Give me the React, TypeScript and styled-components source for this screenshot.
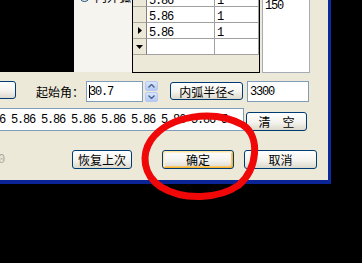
import styled, { createGlobalStyle, css } from "styled-components";

const GlobalStyle = createGlobalStyle`
  html, body {
    margin: 0;
    padding: 0;
    background: #000;
    overflow: hidden;
  }
`;

const cjk = `"Noto Sans CJK SC", "Liberation Sans", sans-serif`;
const mono = `"Liberation Mono", "Noto Sans CJK SC", monospace`;

const Screen = styled.div`
  position: relative;
  width: 362px;
  height: 263px;
  overflow: hidden;
  background: #000;
`;

const Window = styled.div`
  box-sizing: border-box;
  width: 331px;
  height: 184px;
  display: flex;
  flex-direction: column;
  background: #ece9d8;
  border-right: 3px solid #0a2ba0;
  border-bottom: 4px solid #0a2395;
  overflow: hidden;
  font-family: ${cjk};
  font-size: 12px;
  color: #000;
`;

const TopSection = styled.div`
  display: flex;
  align-items: flex-start;
  height: 73px;
  flex-shrink: 0;
`;

const Preview = styled.div`
  width: 74px;
  height: 72px;
  background: #000;
`;

const OptionsPanel = styled.div`
  width: 58px;
  height: 72px;
  background: #f5f4ef;
  overflow: hidden;
  padding-left: 5px;
  box-sizing: border-box;
`;

const RadioRow = styled.div`
  display: flex;
  align-items: center;
  gap: 5px;
  margin-top: -10px;
  height: 13px;
  line-height: 13px;
`;

const Radio = styled.span`
  width: 11px;
  height: 11px;
  border-radius: 50%;
  border: 1px solid #1c5180;
  box-sizing: border-box;
  background: radial-gradient(circle at 50% 50%, #2fa82f 0 2px, #e6e6e0 3px);
`;

const DataTable = styled.div`
  box-sizing: border-box;
  width: 128px;
  height: 73px;
  border: 1px solid #000;
  border-top: none;
  background: #ece9d8;
  overflow: hidden;
`;

const Rows = styled.div`
  margin-top: -9px;
`;

const Row = styled.div`
  display: flex;
  height: 16px;
`;

const RowHeader = styled.div`
  box-sizing: border-box;
  width: 14px;
  height: 16px;
  background: #ece9d8;
  border-right: 1px solid #808080;
  border-bottom: 1px solid #aca899;
  display: flex;
  align-items: center;
  justify-content: center;
`;

const Cell = styled.div<{ $w: number }>`
  box-sizing: border-box;
  width: ${(p) => p.$w}px;
  height: 16px;
  overflow: hidden;
  background: #fff;
  border-right: 1px solid #a0a0a0;
  border-bottom: 1px solid #a0a0a0;
  padding-left: 2px;
  font-family: ${mono};
  font-size: 12px;
  letter-spacing: -1.2px;
  line-height: 20px;
`;

const ListBox = styled.div`
  box-sizing: border-box;
  width: 48px;
  height: 73px;
  margin-left: 2px;
  background: #fff;
  border: 1px solid #a5acb5;
  border-top: none;
  padding-left: 2px;
  font-family: ${mono};
  font-size: 12px;
  letter-spacing: -1.2px;
  line-height: 12px;
  overflow: hidden;
`;

const ParamRow = styled.div`
  display: flex;
  align-items: flex-start;
  margin-top: 8px;
  height: 21px;
  flex-shrink: 0;
`;

const DataRow = styled.div`
  display: flex;
  align-items: flex-end;
  margin-top: 6px;
  height: 23px;
  flex-shrink: 0;
`;

const ActionRow = styled.div`
  display: flex;
  align-items: center;
  margin-top: 19px;
  height: 19px;
  flex-shrink: 0;
`;

const Button = styled.div<{ $w: number; $h?: number; $ml?: number; $default?: boolean }>`
  box-sizing: border-box;
  flex-shrink: 0;
  width: ${(p) => p.$w}px;
  height: ${(p) => p.$h ?? 18}px;
  margin-left: ${(p) => p.$ml ?? 0}px;
  border: 1px solid #003c74;
  border-radius: 3px;
  background: linear-gradient(#ffffff 0%, #f4f3ee 55%, #dcd8cc 100%);
  display: flex;
  align-items: center;
  justify-content: center;
  font-family: ${cjk};
  font-size: 12px;
  white-space: nowrap;
  ${(p) =>
    p.$default &&
    css`
      box-shadow: inset 1px 1px 0 #ffe7a2, inset -1px -1px 0 #f8b330,
        inset 2px 2px 0 #fff0cf, inset -2px -2px 0 #f9c66b;
    `}
`;

const Label = styled.div`
  width: 50px;
  margin-left: 20px;
  height: 21px;
  line-height: 21px;
  white-space: nowrap;
`;

const Field = styled.div<{ $w: number; $h?: number; $ml?: number }>`
  box-sizing: border-box;
  flex-shrink: 0;
  width: ${(p) => p.$w}px;
  height: ${(p) => p.$h ?? 21}px;
  margin-left: ${(p) => p.$ml ?? 0}px;
  background: #fff;
  border: 1px solid #7f9db9;
  padding-left: 2px;
  font-family: ${mono};
  font-size: 12px;
  letter-spacing: -1.2px;
  white-space: nowrap;
  overflow: hidden;
  display: flex;
  align-items: center;
`;

const FieldText = styled.span`
  margin-left: -2px;
  overflow: hidden;
`;

const Caret = styled.span`
  display: inline-block;
  width: 1px;
  height: 13px;
  background: #000;
  margin-right: -1px;
`;

const Spin = styled.div`
  display: flex;
  flex-direction: column;
  gap: 1px;
  width: 13px;
  height: 21px;
  margin-left: 2px;
`;

const SpinHalf = styled.div`
  flex: 1;
  border-radius: 2px;
  background: linear-gradient(#d9e5fd, #b4c8f6);
  border: 1px solid #b7c9f1;
  box-sizing: border-box;
  display: flex;
  align-items: center;
  justify-content: center;
`;

const Disabled = styled.div`
  width: 74px;
  margin-left: -2px;
  color: #aca899;
  font-family: ${mono};
  font-size: 12px;
`;

const Mark = styled.svg`
  position: absolute;
  left: 139px;
  top: 107px;
  pointer-events: none;
`;

const Arrow = ({ dir }: { dir: "up" | "down" }) => (
  <svg width="7" height="4" viewBox="0 0 7 4">
    <path
      d={dir === "up" ? "M0.5 3.5 L3.5 0.5 L6.5 3.5" : "M0.5 0.5 L3.5 3.5 L6.5 0.5"}
      fill="none"
      stroke="#4d6185"
      strokeWidth="1.4"
    />
  </svg>
);

const rows = [
  { v: "5.86", n: "1", mark: "" },
  { v: "5.86", n: "1", mark: "" },
  { v: "5.86", n: "1", mark: "cur" },
  { v: "", n: "", mark: "new" },
];

function App() {
  return (
    <Screen>
      <GlobalStyle />
      <Window>
        <TopSection>
          <Preview />
          <OptionsPanel>
            <RadioRow>
              <Radio />
              <span>内外弧</span>
            </RadioRow>
          </OptionsPanel>
          <DataTable>
            <Rows>
              {rows.map((r, i) => (
                <Row key={i}>
                  <RowHeader>
                    {r.mark === "cur" && (
                      <svg width="4" height="7" viewBox="0 0 4 7">
                        <path d="M0 0 L4 3.5 L0 7 Z" fill="#000" />
                      </svg>
                    )}
                    {r.mark === "new" && (
                      <svg width="7" height="4" viewBox="0 0 7 4">
                        <path d="M0 0 L7 0 L3.5 4 Z" fill="#000" />
                      </svg>
                    )}
                  </RowHeader>
                  <Cell $w={68}>{r.v}</Cell>
                  <Cell $w={44}>{r.n}</Cell>
                </Row>
              ))}
            </Rows>
          </DataTable>
          <ListBox>150</ListBox>
        </TopSection>

        <ParamRow>
          <Button $w={30} $ml={-14} />
          <Label>起始角：</Label>
          <Field $w={57}>
            <Caret />
            30.7
          </Field>
          <Spin>
            <SpinHalf>
              <Arrow dir="up" />
            </SpinHalf>
            <SpinHalf>
              <Arrow dir="down" />
            </SpinHalf>
          </Spin>
          <Button $w={73} $ml={12} style={{ marginTop: 1 }}>
            内弧半径&lt;
          </Button>
          <Field $w={62} $ml={4}>
            3300
          </Field>
        </ParamRow>

        <DataRow>
          <Field $w={246} $h={23} $ml={-2}>
            <FieldText>6 5.86 5.86 5.86 5.86 5.86 5.86 5.86 5.</FieldText>
          </Field>
          <Button $w={61} $h={19} $ml={2}>
            清　空
          </Button>
        </DataRow>

        <ActionRow>
          <Disabled>0</Disabled>
          <Button $w={60} $h={19}>
            恢复上次
          </Button>
          <Button $w={72} $h={19} $ml={30} $default>
            确定
          </Button>
          <Button $w={73} $h={19} $ml={10}>
            取消
          </Button>
        </ActionRow>
      </Window>

      <Mark width="124" height="96" viewBox="0 0 124 96">
        <path
          d="M12 33 C 30 8, 75 2, 104 18 C 122 30, 118 62, 100 78 C 80 92, 45 94, 22 80 C 4 68, 2 48, 12 33 Z"
          fill="none"
          stroke="#f00808"
          strokeWidth="7"
          strokeLinecap="round"
        />
      </Mark>
    </Screen>
  );
}

export default App;
